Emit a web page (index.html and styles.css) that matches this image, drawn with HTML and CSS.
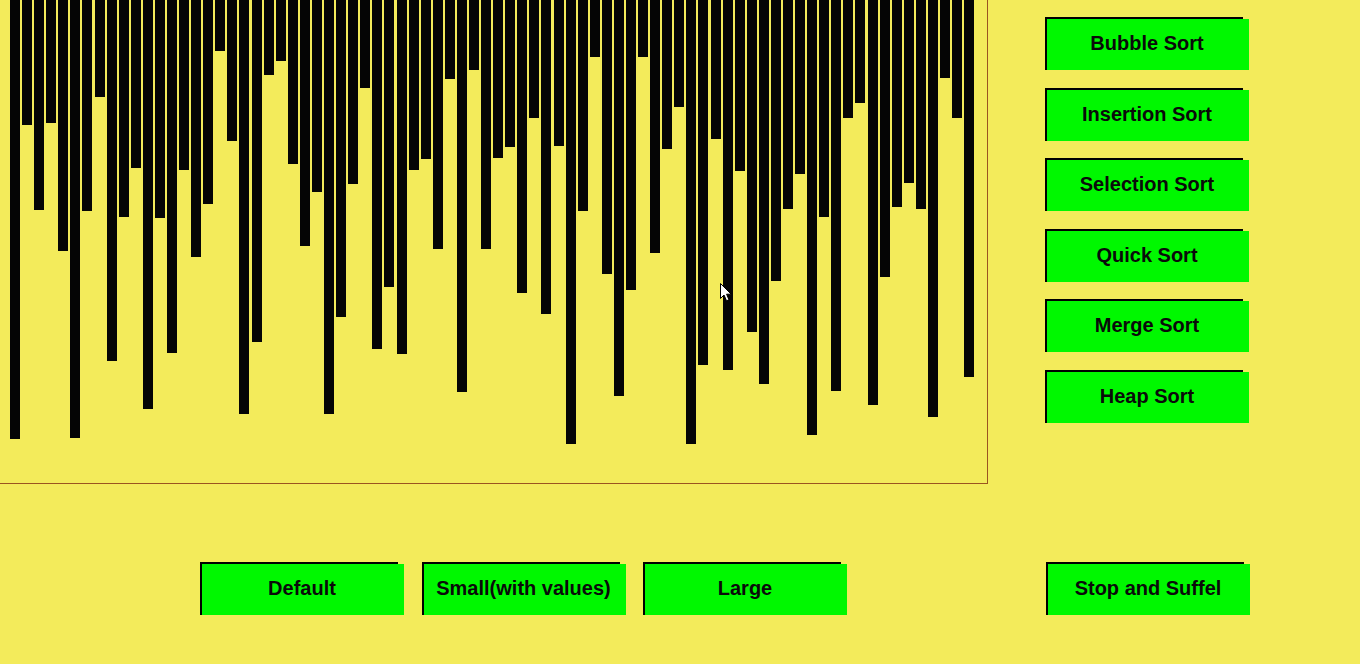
FILE: index.html
```html
<!DOCTYPE html>
<html lang="en">
<head>
<meta charset="utf-8">
<title>Sorting Visualizer</title>
<link rel="stylesheet" href="styles.css">
</head>
<body>
<div class="app">
  <div class="top">
    <div class="chart">
      <div class="bars">
        <div class="bar" style="height:439px"></div>
        <div class="bar" style="height:125px"></div>
        <div class="bar" style="height:210px"></div>
        <div class="bar" style="height:123px"></div>
        <div class="bar" style="height:251px"></div>
        <div class="bar" style="height:438px"></div>
        <div class="bar" style="height:211px"></div>
        <div class="bar" style="height:97px"></div>
        <div class="bar" style="height:361px"></div>
        <div class="bar" style="height:217px"></div>
        <div class="bar" style="height:168px"></div>
        <div class="bar" style="height:409px"></div>
        <div class="bar" style="height:218px"></div>
        <div class="bar" style="height:353px"></div>
        <div class="bar" style="height:170px"></div>
        <div class="bar" style="height:257px"></div>
        <div class="bar" style="height:204px"></div>
        <div class="bar" style="height:51px"></div>
        <div class="bar" style="height:141px"></div>
        <div class="bar" style="height:414px"></div>
        <div class="bar" style="height:342px"></div>
        <div class="bar" style="height:75px"></div>
        <div class="bar" style="height:61px"></div>
        <div class="bar" style="height:164px"></div>
        <div class="bar" style="height:246px"></div>
        <div class="bar" style="height:192px"></div>
        <div class="bar" style="height:414px"></div>
        <div class="bar" style="height:317px"></div>
        <div class="bar" style="height:184px"></div>
        <div class="bar" style="height:88px"></div>
        <div class="bar" style="height:349px"></div>
        <div class="bar" style="height:287px"></div>
        <div class="bar" style="height:354px"></div>
        <div class="bar" style="height:170px"></div>
        <div class="bar" style="height:159px"></div>
        <div class="bar" style="height:249px"></div>
        <div class="bar" style="height:79px"></div>
        <div class="bar" style="height:392px"></div>
        <div class="bar" style="height:70px"></div>
        <div class="bar" style="height:249px"></div>
        <div class="bar" style="height:158px"></div>
        <div class="bar" style="height:147px"></div>
        <div class="bar" style="height:293px"></div>
        <div class="bar" style="height:118px"></div>
        <div class="bar" style="height:314px"></div>
        <div class="bar" style="height:146px"></div>
        <div class="bar" style="height:444px"></div>
        <div class="bar" style="height:211px"></div>
        <div class="bar" style="height:57px"></div>
        <div class="bar" style="height:274px"></div>
        <div class="bar" style="height:396px"></div>
        <div class="bar" style="height:290px"></div>
        <div class="bar" style="height:57px"></div>
        <div class="bar" style="height:253px"></div>
        <div class="bar" style="height:149px"></div>
        <div class="bar" style="height:107px"></div>
        <div class="bar" style="height:444px"></div>
        <div class="bar" style="height:365px"></div>
        <div class="bar" style="height:139px"></div>
        <div class="bar" style="height:370px"></div>
        <div class="bar" style="height:171px"></div>
        <div class="bar" style="height:332px"></div>
        <div class="bar" style="height:384px"></div>
        <div class="bar" style="height:281px"></div>
        <div class="bar" style="height:209px"></div>
        <div class="bar" style="height:174px"></div>
        <div class="bar" style="height:435px"></div>
        <div class="bar" style="height:217px"></div>
        <div class="bar" style="height:391px"></div>
        <div class="bar" style="height:118px"></div>
        <div class="bar" style="height:103px"></div>
        <div class="bar" style="height:405px"></div>
        <div class="bar" style="height:277px"></div>
        <div class="bar" style="height:207px"></div>
        <div class="bar" style="height:183px"></div>
        <div class="bar" style="height:209px"></div>
        <div class="bar" style="height:417px"></div>
        <div class="bar" style="height:78px"></div>
        <div class="bar" style="height:118px"></div>
        <div class="bar" style="height:377px"></div>
      </div>
    </div>
    <div class="side">
      <button class="btn">Bubble Sort</button>
      <button class="btn">Insertion Sort</button>
      <button class="btn">Selection Sort</button>
      <button class="btn">Quick Sort</button>
      <button class="btn">Merge Sort</button>
      <button class="btn">Heap Sort</button>
    </div>
  </div>
  <div class="bottom">
    <button class="btn">Default</button>
    <button class="btn">Small(with values)</button>
    <button class="btn">Large</button>
    <button class="btn btn-stop">Stop and Suffel</button>
  </div>
  <svg class="cursor" width="13" height="20" viewBox="0 0 13 20" aria-hidden="true">
    <path d="M0.5 0.5 L0.5 15.5 L4 12 L6.5 17.8 L9 16.8 L6.6 11.2 L11.2 11.2 Z" fill="#fff" stroke="#000" stroke-width="1"/>
  </svg>
</div>
</body>
</html>
```

FILE: styles.css
```css
html, body {
  margin: 0;
  padding: 0;
}

body {
  background: #f3eb5b;
  font-family: "Liberation Sans", Arial, sans-serif;
  width: 1360px;
  height: 664px;
  overflow: hidden;
}

.app {
  position: relative;
  width: 1360px;
  height: 664px;
}

.top {
  display: flex;
  align-items: flex-start;
}

.chart {
  width: 987px;
  height: 483px;
  border-right: 1px solid #9a5420;
  border-bottom: 1px solid #9a5420;
  overflow: hidden;
}

.bars {
  display: flex;
  align-items: flex-start;
  gap: 2.089px;
  padding-left: 10px;
}

.bar {
  flex: 0 0 10px;
  width: 10px;
  background: #050505;
}

.side {
  display: flex;
  flex-direction: column;
  gap: 17.5px;
  margin-left: 57px;
  padding-top: 17px;
}

.btn {
  box-sizing: border-box;
  width: 204px;
  height: 53px;
  padding: 0;
  border: none;
  margin: 0;
  display: flex;
  align-items: center;
  justify-content: center;
  font-family: "Liberation Sans", Arial, sans-serif;
  font-weight: bold;
  font-size: 20px;
  color: #0a0a0a;
  background:
    linear-gradient(#000, #000) 0 0 / 198px 2px no-repeat,
    linear-gradient(#000, #000) 0 0 / 2px 100% no-repeat,
    linear-gradient(#00f800, #00f800) 2px 2px / 202px 51px no-repeat;
  cursor: pointer;
}

.bottom {
  display: flex;
  gap: 17.5px;
  padding-left: 200px;
  margin-top: 78px;
}

.btn-stop {
  margin-left: 181.5px;
}

.cursor {
  position: absolute;
  left: 720px;
  top: 283px;
}
```
